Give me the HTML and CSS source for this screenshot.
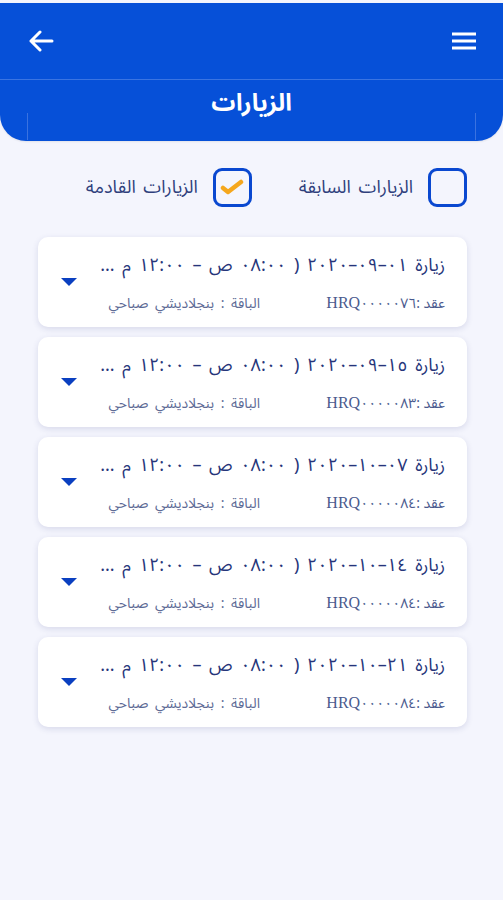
FILE: index.html
```html
<!DOCTYPE html>
<html lang="ar" dir="rtl">
<head>
<meta charset="utf-8">
<title>الزيارات</title>
<link rel="stylesheet" href="styles.css">
</head>
<body>
<div class="page">
  <header class="header">
    <div class="toolbar">
      <svg class="icon" width="26" height="20" viewBox="0 0 26 20"><path d="M1 3h24M1 10h24M1 17h24" stroke="#fff" stroke-width="3" fill="none"/></svg>
      <svg class="icon" width="26" height="22" viewBox="0 0 26 22"><path d="M24 11H3M12 2L3 11l9 9" stroke="#fff" stroke-width="3" fill="none" stroke-linecap="round" stroke-linejoin="round"/></svg>
    </div>
    <div class="title-bar">
      <h1 class="title">الزيارات</h1>
    </div>
  </header>

  <div class="filters">
    <label class="filter">
      <span class="box"></span>
      <span class="filter-text">الزيارات السابقة</span>
    </label>
    <label class="filter">
      <span class="box">
        <svg width="24" height="18" viewBox="0 0 24 18"><path d="M3 10l5 4L21 4" stroke="#f5a71d" stroke-width="4.5" fill="none" stroke-linecap="round" stroke-linejoin="round"/></svg>
      </span>
      <span class="filter-text">الزيارات القادمة</span>
    </label>
  </div>

  <div class="list">
    <div class="card">
      <div class="info">
        <div class="visit">زيارة ٠١–٠٩–٢٠٢٠ ( ٠٨:٠٠ ص – ١٢:٠٠ م ...</div>
        <div class="meta"><span class="contract">عقد :<span class="latin">HRQ</span>٠٠٠٠٠٧٦</span><span class="package">الباقة : بنجلاديشي صباحي</span></div>
      </div>
      <span class="caret"></span>
    </div>
    <div class="card">
      <div class="info">
        <div class="visit">زيارة ١٥–٠٩–٢٠٢٠ ( ٠٨:٠٠ ص – ١٢:٠٠ م ...</div>
        <div class="meta"><span class="contract">عقد :<span class="latin">HRQ</span>٠٠٠٠٠٨٣</span><span class="package">الباقة : بنجلاديشي صباحي</span></div>
      </div>
      <span class="caret"></span>
    </div>
    <div class="card">
      <div class="info">
        <div class="visit">زيارة ٠٧–١٠–٢٠٢٠ ( ٠٨:٠٠ ص – ١٢:٠٠ م ...</div>
        <div class="meta"><span class="contract">عقد :<span class="latin">HRQ</span>٠٠٠٠٠٨٤</span><span class="package">الباقة : بنجلاديشي صباحي</span></div>
      </div>
      <span class="caret"></span>
    </div>
    <div class="card">
      <div class="info">
        <div class="visit">زيارة ١٤–١٠–٢٠٢٠ ( ٠٨:٠٠ ص – ١٢:٠٠ م ...</div>
        <div class="meta"><span class="contract">عقد :<span class="latin">HRQ</span>٠٠٠٠٠٨٤</span><span class="package">الباقة : بنجلاديشي صباحي</span></div>
      </div>
      <span class="caret"></span>
    </div>
    <div class="card">
      <div class="info">
        <div class="visit">زيارة ٢١–١٠–٢٠٢٠ ( ٠٨:٠٠ ص – ١٢:٠٠ م ...</div>
        <div class="meta"><span class="contract">عقد :<span class="latin">HRQ</span>٠٠٠٠٠٨٤</span><span class="package">الباقة : بنجلاديشي صباحي</span></div>
      </div>
      <span class="caret"></span>
    </div>
  </div>
</div>
</body>
</html>
```

FILE: styles.css
```css
* { box-sizing: border-box; }
html, body { margin: 0; padding: 0; }
body {
  background: #f4f5fd;
  font-family: "Noto Sans Arabic", "DejaVu Sans", "Noto Sans", sans-serif;
  width: 503px;
  height: 900px;
  overflow: hidden;
}
.page { padding-top: 3px; }
.header {
  background: #0650d8;
  border-radius: 0 0 26px 26px;
  height: 138px;
  box-shadow: 0 1px 2px rgba(0,0,0,0.08);
}
.toolbar {
  height: 77px;
  display: flex;
  align-items: center;
  justify-content: space-between;
  padding: 0 26px 0 28px;
  border-bottom: 1px solid #3a74e2;
}
.icon { display: block; }
.title-bar {
  height: 60px;
  display: flex;
  justify-content: center;
  margin: 0 27px 0 27px;
  border-left: 1px solid #2c66dc;
  border-right: 1px solid #2c66dc;
  border-image: linear-gradient(to bottom, transparent 55%, #3a72e0 55%) 1;
}
.title {
  margin: 0;
  color: #fff;
  font-size: 24px;
  font-weight: 700;
  line-height: 48px;
}
.filters {
  display: flex;
  align-items: center;
  gap: 47px;
  padding: 0 36px 0 0;
  height: 96px;
  margin-top: -2px;
}
.filter {
  display: flex;
  align-items: center;
  gap: 15px;
}
.box {
  width: 39px;
  height: 39px;
  border: 3px solid #0a48d0;
  border-radius: 9px;
  display: flex;
  align-items: center;
  justify-content: center;
}
.box svg { display: block; }
.filter-text {
  color: #2f3f7c;
  font-size: 18px;
  word-spacing: 3px;
}
.list {
  display: flex;
  flex-direction: column;
  gap: 10px;
  padding: 0 36px 0 38px;
  margin-top: 2px;
}
.card {
  background: #fff;
  border-radius: 10px;
  height: 90px;
  box-shadow: 0 2px 6px rgba(40, 50, 120, 0.14);
  display: flex;
  align-items: center;
  padding: 0 22px 0 23px;
  gap: 16px;
}
.info {
  flex: 1;
  min-width: 0;
  display: flex;
  flex-direction: column;
  gap: 17px;
  margin-top: 2px;
}
.visit {
  color: #26357a;
  font-size: 18px;
  word-spacing: 3px;
  white-space: nowrap;
  line-height: 24px;
}
.meta {
  display: flex;
  align-items: center;
  font-size: 14px;
  color: #4a5a8e;
  line-height: 18px;
}
.latin { font-family: "Liberation Serif", serif; font-size: 16px; }
.contract { width: 185px; }
.package { color: #5d6a95; word-spacing: 3px; }
.caret {
  width: 0;
  height: 0;
  border-left: 8px solid transparent;
  border-right: 8px solid transparent;
  border-top: 8px solid #0a3fc0;
  margin-top: 0;
}
```
